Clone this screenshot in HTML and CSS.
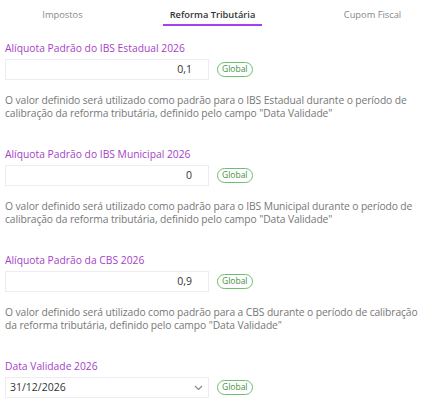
FILE: index.html
```html
<!DOCTYPE html>
<html lang="pt-BR">
<head>
    <meta charset="UTF-8">
    <meta name="viewport" content="width=device-width, initial-scale=1.0">
    <link rel="stylesheet" href="styles.css">
</head>
<body>
    <div class="tabs">
        <div class="tab tab-impostos">Impostos</div>
        <div class="tab tab-reforma active">Reforma Tributária</div>
        <div class="tab tab-cupom">Cupom Fiscal</div>
    </div>

    <div class="content">
        <div class="field">
            <label class="field-label">Alíquota Padrão do IBS Estadual 2026</label>
            <div class="field-row">
                <div class="input">0,1</div>
                <span class="badge">Global</span>
            </div>
            <p class="help">O valor definido será utilizado como padrão para o IBS Estadual durante o período de calibração da reforma tributária, definido pelo campo "Data Validade"</p>
        </div>

        <div class="field">
            <label class="field-label">Alíquota Padrão do IBS Municipal 2026</label>
            <div class="field-row">
                <div class="input">0</div>
                <span class="badge">Global</span>
            </div>
            <p class="help">O valor definido será utilizado como padrão para o IBS Municipal durante o período de calibração da reforma tributária, definido pelo campo "Data Validade"</p>
        </div>

        <div class="field">
            <label class="field-label">Alíquota Padrão da CBS 2026</label>
            <div class="field-row">
                <div class="input">0,9</div>
                <span class="badge">Global</span>
            </div>
            <p class="help">O valor definido será utilizado como padrão para a CBS durante o período de calibração da reforma tributária, definido pelo campo "Data Validade"</p>
        </div>

        <div class="field">
            <label class="field-label">Data Validade 2026</label>
            <div class="field-row">
                <div class="input select">
                    <span>31/12/2026</span>
                    <svg width="9" height="6" viewBox="0 0 9 6"><path d="M1 1l3.5 3.5L8 1" fill="none" stroke="#888" stroke-width="1.2"/></svg>
                </div>
                <span class="badge">Global</span>
            </div>
        </div>
    </div>
</body>
</html>
```

FILE: styles.css
```css
body {
    font-family: "Open Sans", "Noto Sans", Arial, sans-serif;
    font-size: 11px;
    margin: 0;
    padding: 0;
    background: #fff;
    color: #333;
    overflow: hidden;
}
.tabs {
    display: flex;
    height: 26px;
}
.tab {
    text-align: center;
    height: 26px;
    padding-top: 5px;
    line-height: 19px;
    box-sizing: border-box;
    color: #888;
    font-size: 9.3px;
}
.tab-impostos {
    width: 125px;
}
.tab-reforma {
    width: 99px;
    margin-left: 38px;
}
.tab-cupom {
    width: 105px;
    margin-left: auto;
}
.tab.active {
    color: #333;
    font-weight: 600;
    border-bottom: 2px solid #a640ee;
}
.content {
    padding: 15px 0 0 5px;
}
.field {
    margin-bottom: 27px;
}
.field-label {
    display: block;
    color: #a53fc6;
    font-size: 10.3px;
    line-height: 14px;
    margin-bottom: 4px;
}
.field-row {
    display: flex;
    align-items: center;
    gap: 8px;
}
.input {
    width: 204px;
    height: 21px;
    box-sizing: border-box;
    border: 1px solid #ececf2;
    text-align: right;
    padding-right: 16px;
    line-height: 19px;
    color: #333;
    font-size: 10.5px;
}
.select {
    display: flex;
    justify-content: space-between;
    align-items: center;
    text-align: left;
    padding: 0 5px 0 4px;
    font-size: 10.5px;
}
.badge {
    display: inline-block;
    height: 15px;
    line-height: 12px;
    box-sizing: border-box;
    padding: 0 4px;
    border: 1.5px solid #6cbf6c;
    border-radius: 8px;
    color: #3f8f3f;
    font-size: 8.5px;
}
.help {
    margin: 14px 0 0 0;
    line-height: 13px;
    color: #777;
    font-size: 10.3px;
    letter-spacing: -0.1px;
    padding-right: 2px;
}
```
